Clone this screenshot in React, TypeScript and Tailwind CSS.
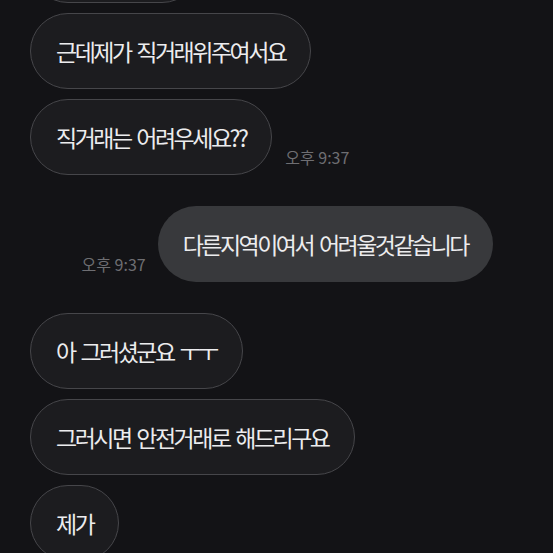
const font = { fontFamily: '"Noto Sans CJK KR", "Noto Sans", sans-serif' };

type Msg = { text: string; mine?: boolean; time?: string; gapTop?: boolean };

const messages: Msg[] = [
  { text: '네 가능하세요' },
  { text: '근데제가 직거래위주여서요' },
  { text: '직거래는 어려우세요??', time: '오후 9:37' },
  { text: '다른지역이여서 어려울것같습니다', mine: true, time: '오후 9:37', gapTop: true },
  { text: '아 그러셨군요 ㅜㅜ', gapTop: true },
  { text: '그러시면 안전거래로 해드리구요' },
  { text: '제가' },
];

const Time = ({ t }: { t: string }) => (
  <span className="text-[16px] leading-none text-[#6e6e72] whitespace-nowrap mb-[10px]">{t}</span>
);

export default function App() {
  return (
    <div
      className="w-[553px] h-[553px] overflow-hidden bg-[#131316] text-[#ececee]"
      style={font}
    >
      <div className="-mt-[73px] flex flex-col">
        {messages.map((m, i) => (
          <div
            key={i}
            className={`flex items-end ${m.mine ? 'justify-end pr-[60px]' : 'pl-[30px]'} ${
              m.gapTop ? 'mt-[31px]' : i === 0 ? '' : 'mt-[10px]'
            }`}
          >
            {m.mine && m.time && (
              <span className="mr-[12px] flex">
                <Time t={m.time} />
              </span>
            )}
            <div
              className={`h-[76px] flex items-center rounded-full px-[25px] text-[23px] tracking-[-0.11em] [word-spacing:0.14em] whitespace-nowrap ${
                m.mine ? 'bg-[#38393c]' : 'bg-[#1c1c1f] border border-[#46464a]'
              }`}
            >
              {m.text}
            </div>
            {!m.mine && m.time && (
              <span className="ml-[13px] flex">
                <Time t={m.time} />
              </span>
            )}
          </div>
        ))}
      </div>
    </div>
  );
}
